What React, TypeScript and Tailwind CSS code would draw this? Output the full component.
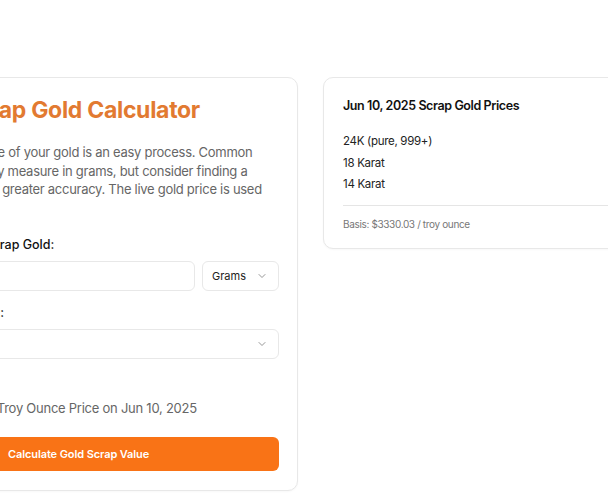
import React from "react";

function Chevron() {
  return (
    <svg width="12" height="12" viewBox="0 0 24 24" fill="none" stroke="#7b7b7b" strokeWidth="1.6" strokeLinecap="round" strokeLinejoin="round">
      <path d="m6 9 6 6 6-6" />
    </svg>
  );
}

export default function App() {
  return (
    <div className="w-[608px] h-[501px] overflow-hidden bg-white" style={{ fontFamily: "Inter, 'Noto Sans', sans-serif" }}>
      <div className="flex items-start gap-[25px] pt-[77px] -ml-[62px] w-[900px]">
        <div className="w-[360px] shrink-0 rounded-[10px] border border-[#e8e8e8] bg-white pt-[16px] pb-[19px] pl-[27px] pr-[18px] shadow-[0_1px_2px_rgba(0,0,0,0.03)]">
          <h1 className="-ml-1 text-[23px] leading-[32px] font-bold text-[#e27a31] tracking-[-0.3px]">Scrap Gold Calculator</h1>
          <p className="mt-[17px] text-[13px] leading-[18.5px] text-[#666666] tracking-[-0.28px] whitespace-nowrap">
            Gauge of your gold is an easy process. Common
            <br />
            simply measure in grams, but consider finding a
            <br />
            loupe greater accuracy. The live gold price is used
            <br />
            too.
          </p>
          <div className="mt-[18px] text-[12.5px] leading-[20px] font-medium text-[#111]">All Scrap Gold:</div>
          <div className="mt-[6px] flex gap-[7px]">
            <div className="flex-1 h-[30px] rounded-[6px] border border-[#e8e8e8]" />
            <div className="w-[77px] h-[30px] rounded-[6px] border border-[#e8e8e8] flex items-center justify-between pl-[9px] pr-[10px] text-[11px] text-[#222]">
              <span>Grams</span>
              <Chevron />
            </div>
          </div>
          <div className="mt-[12px] text-[12.5px] leading-[20px] font-medium text-[#111]">
            <span className="tracking-[0.5px]">Karat</span>:
          </div>
          <div className="mt-[6px] h-[30px] rounded-[6px] border border-[#e8e8e8] flex items-center justify-end pr-[10px]">
            <Chevron />
          </div>
          <div className="mt-[39px] text-[13px] leading-[20px] text-[#666666] tracking-[-0.25px]">Spot Troy Ounce Price on Jun 10, 2025</div>
          <button className="mt-[19px] w-full h-[34px] rounded-[6px] bg-[#f97316] text-left pl-[42px] text-[11px] font-semibold text-white tracking-[-0.1px]">
            Calculate Gold Scrap Value
          </button>
        </div>
        <div className="w-[360px] shrink-0 rounded-[10px] border border-[#e8e8e8] bg-white pt-[17px] pb-[16px] px-[19px] shadow-[0_1px_2px_rgba(0,0,0,0.03)]">
          <h2 className="text-[12.5px] leading-[22px] font-semibold text-[#111] tracking-[-0.4px]">Jun 10, 2025 Scrap Gold Prices</h2>
          <div className="mt-[14px] text-[11.5px] leading-[21.5px] text-[#222] tracking-[-0.3px]">
            <div>24K (pure, 999+)</div>
            <div>18 Karat</div>
            <div>14 Karat</div>
          </div>
          <div className="mt-[9px] border-t border-[#e5e5e5] pt-[10px] text-[10px] leading-[16px] text-[#777] tracking-[-0.35px]">
            Basis: $3330.03 / troy ounce
          </div>
        </div>
      </div>
    </div>
  );
}
